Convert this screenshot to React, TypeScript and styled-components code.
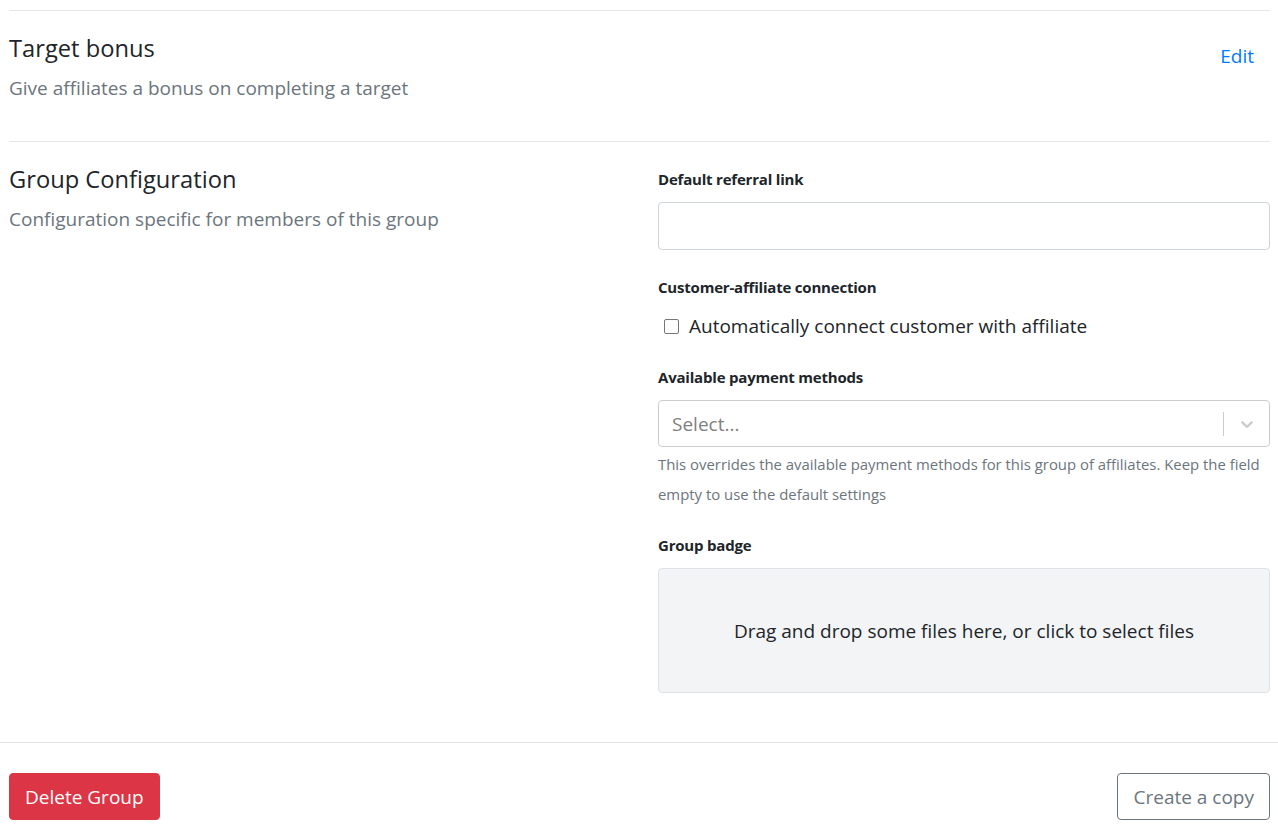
import React from "react";
import styled, { createGlobalStyle } from "styled-components";

const Global = createGlobalStyle`
  html, body { margin: 0; padding: 0; background: #fff; }
  body { font-family: "Open Sans", "Noto Sans", Arial, sans-serif; color: #212529; }
  * { box-sizing: border-box; }
`;

const Page = styled.div`
  padding-top: 10px;
  width: 1278px;
`;

const Section = styled.section<{ $bottom: number }>`
  margin: 0 8px 0 9px;
  border-top: 1px solid #e6e6e6;
  display: grid;
  grid-template-columns: 649px 612px;
  padding: 23px 0 ${(p) => p.$bottom}px;
`;

const Intro = styled.div`
  display: flex;
  flex-direction: column;
`;

const Title = styled.h2`
  margin: 0 0 12px;
  font-size: 23.7px;
  line-height: 29px;
  font-weight: 400;
  color: #212529;
`;

const Subtitle = styled.p`
  margin: 0;
  font-size: 19px;
  line-height: 27px;
  color: #6c757d;
`;

const EditCell = styled.div`
  display: flex;
  justify-content: flex-end;
  align-items: flex-start;
  padding-top: 5px;
`;

const LinkButton = styled.button`
  border: none;
  background: none;
  padding: 4px 16px;
  font: inherit;
  font-size: 19px;
  line-height: 27px;
  color: #007bff;
  cursor: pointer;
`;

const Form = styled.div`
  display: flex;
  flex-direction: column;
`;

const Group = styled.div<{ $gap: number }>`
  display: flex;
  flex-direction: column;
  margin-bottom: ${(p) => p.$gap}px;
`;

const Label = styled.label`
  font-size: 15px;
  line-height: 22px;
  font-weight: 700;
  color: #212529;
  margin-top: 3px;
  margin-bottom: 12px;
  letter-spacing: -0.2px;
`;

const TextInput = styled.input`
  height: 48px;
  width: 100%;
  border: 1px solid #ced4da;
  border-radius: 4px;
  font: inherit;
  font-size: 19px;
  padding: 6px 12px;
  outline: none;
`;

const CheckRow = styled.label`
  display: flex;
  align-items: center;
  gap: 10px;
  padding-left: 6px;
  margin-top: 3px;
  font-size: 19px;
  line-height: 27px;
  color: #212529;
`;

const Box = styled.span`
  width: 15px;
  height: 15px;
  border: 1.5px solid #767676;
  border-radius: 2px;
  background: #fff;
  flex: none;
  margin-top: -1px;
`;

const SelectBox = styled.div`
  height: 47px;
  border: 1px solid #cccccc;
  border-radius: 4px;
  display: flex;
  align-items: center;
`;

const Placeholder = styled.span`
  flex: 1;
  padding-left: 13px;
  font-size: 19px;
  color: #808080;
`;

const Separator = styled.span`
  width: 1px;
  height: 24px;
  background: #cccccc;
`;

const Indicator = styled.span`
  width: 45px;
  display: flex;
  justify-content: center;
  align-items: center;
  color: #cccccc;
`;

const Help = styled.small`
  display: block;
  margin-top: 2px;
  font-size: 14.9px;
  line-height: 30px;
  color: #6c757d;
`;

const Dropzone = styled.div`
  height: 125px;
  background: #f3f4f6;
  border: 1px solid #dee2e6;
  border-radius: 4px;
  display: flex;
  align-items: center;
  justify-content: center;
  font-size: 19px;
  color: #212529;
`;

const Footer = styled.footer`
  border-top: 1px solid #e2e2e6;
  display: flex;
  justify-content: space-between;
  padding: 30px 8px 20px 9px;
`;

const Button = styled.button<{ $variant: "danger" | "outline" }>`
  height: 47px;
  padding: 0 15px;
  border-radius: 4px;
  font: inherit;
  font-size: 19px;
  cursor: pointer;
  ${(p) =>
    p.$variant === "danger"
      ? `background:#dc3545;border:1px solid #dc3545;color:#fff;`
      : `background:#fff;border:1px solid #6c757d;color:#6c757d;`}
`;

export default function App() {
  return (
    <Page>
      <Global />
      <Section $bottom={39}>
        <Intro>
          <Title>Target bonus</Title>
          <Subtitle>Give affiliates a bonus on completing a target</Subtitle>
        </Intro>
        <EditCell>
          <LinkButton>Edit</LinkButton>
        </EditCell>
      </Section>
      <Section $bottom={0}>
        <Intro>
          <Title>Group Configuration</Title>
          <Subtitle>Configuration specific for members of this group</Subtitle>
        </Intro>
        <Form>
          <Group $gap={23}>
            <Label>Default referral link</Label>
            <TextInput type="text" />
          </Group>
          <Group $gap={23}>
            <Label>Customer-affiliate connection</Label>
            <CheckRow>
              <Box />
              Automatically connect customer with affiliate
            </CheckRow>
          </Group>
          <Group $gap={22}>
            <Label>Available payment methods</Label>
            <SelectBox>
              <Placeholder>Select...</Placeholder>
              <Separator />
              <Indicator>
                <svg width="20" height="20" viewBox="0 0 20 20" fill="currentColor">
                  <path d="M4.516 7.548c0.436-0.446 1.043-0.481 1.576 0l3.908 3.747 3.908-3.747c0.533-0.481 1.141-0.446 1.574 0 0.436 0.445 0.408 1.197 0 1.615-0.406 0.418-4.695 4.502-4.695 4.502-0.217 0.223-0.502 0.335-0.787 0.335s-0.57-0.112-0.789-0.335c0 0-4.287-4.084-4.695-4.502s-0.436-1.17 0-1.615z" />
                </svg>
              </Indicator>
            </SelectBox>
            <Help>
              This overrides the available payment methods for this group of affiliates. Keep the field empty to use the default settings
            </Help>
          </Group>
          <Group $gap={49}>
            <Label>Group badge</Label>
            <Dropzone>Drag and drop some files here, or click to select files</Dropzone>
          </Group>
        </Form>
      </Section>
      <Footer>
        <Button $variant="danger">Delete Group</Button>
        <Button $variant="outline">Create a copy</Button>
      </Footer>
    </Page>
  );
}
